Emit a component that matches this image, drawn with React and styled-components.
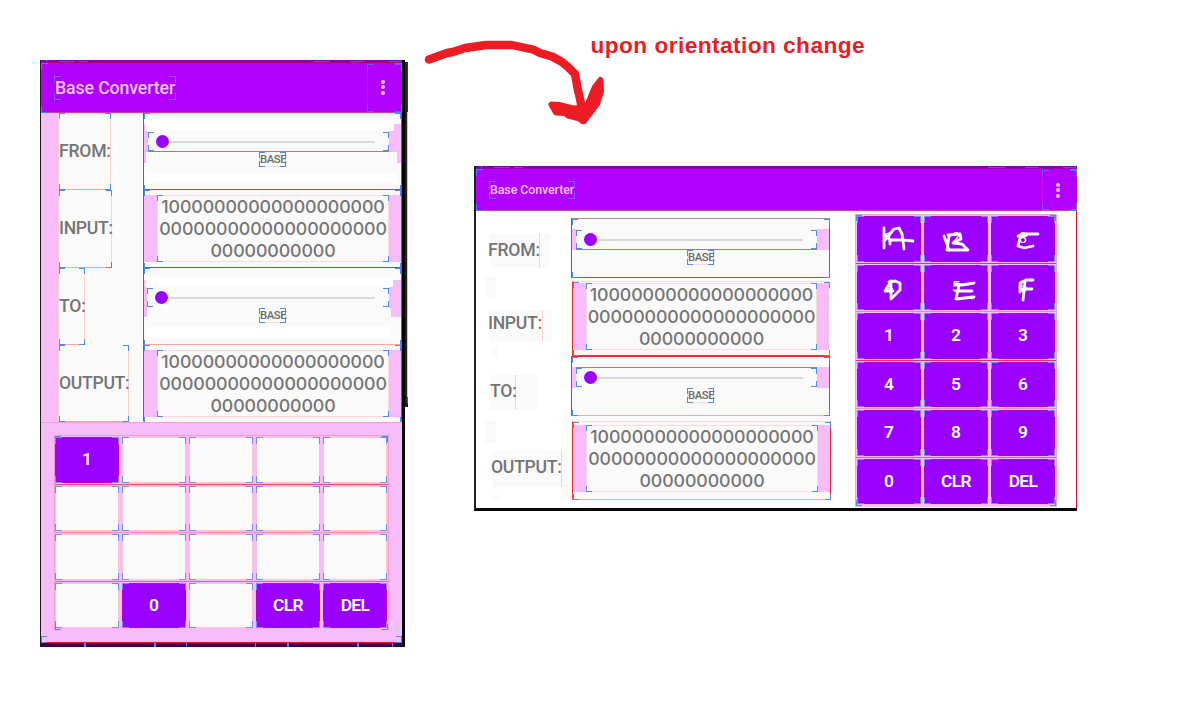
import React from 'react';
import styled, { createGlobalStyle, css } from 'styled-components';

const BLUE = '#4c8bf5';
const RED = '#f52b33';
const PINK = '#f9bcfa';
const PAPER = '#fafafa';
const KEY = '#9900ff';
const BAR = '#b200ff';

const Global = createGlobalStyle`
  * { box-sizing: border-box; }
  body { margin: 0; background: #fff; overflow: hidden; font-family: Roboto, sans-serif; }
`;

const corners = (len = 6, color = BLUE) => {
  const g = `linear-gradient(${color}, ${color})`;
  return css`
    background:
      ${g} left top / ${len}px 1px no-repeat,
      ${g} left top / 1px ${len}px no-repeat,
      ${g} right top / ${len}px 1px no-repeat,
      ${g} right top / 1px ${len}px no-repeat,
      ${g} left bottom / ${len}px 1px no-repeat,
      ${g} left bottom / 1px ${len}px no-repeat,
      ${g} right bottom / ${len}px 1px no-repeat,
      ${g} right bottom / 1px ${len}px no-repeat;
  `;
};

/* Draws blue layout-bounds corners over an element. */
const bounds = (len, color, inset = '0') => css`
  position: relative;
  &::after {
    content: '';
    position: absolute;
    inset: ${inset};
    pointer-events: none;
    ${corners(len, color)}
  }
`;

const Page = styled.main`
  display: flex;
  align-items: flex-start;
  width: 1188px;
  height: 722px;
  padding-left: 40px;
  background: #fff;
`;

const Right = styled.section`
  display: flex;
  flex-direction: column;
`;

/* ---------- annotation ---------- */
const Annotation = styled.div`
  display: flex;
  height: 166px;
  padding-left: 12px;
`;
const Arrow = styled.svg`
  width: 190px;
  height: 140px;
  flex: none;
`;
const Note = styled.div`
  margin: 32px 0 0 -19.5px;
  font: bold 22.7px/27px 'Liberation Sans', Arial, sans-serif;
  letter-spacing: 0.43px;
  color: #ed1c24;
  white-space: nowrap;
`;

/* ---------- portrait frame ---------- */
const Portrait = styled.div`
  display: flex;
  align-items: flex-start;
  width: 368px;
  margin-top: 60px;
`;
const PortraitScreen = styled.div`
  width: 365px;
  height: 587px;
  border-left: 1px solid #1c1c1c;
  border-right: 3px solid #050505;
  display: flex;
  flex-direction: column;
`;
const SideShadow = styled.div`
  width: 3px;
  height: 345px;
  margin-top: 2px;
  border-left: 2px solid #222;
  background: linear-gradient(#5b0aa5 0 50px, #f0b4f4 50px 335px, #2d5ba8 335px 342px, #000 342px);
`;

const StatusEdge = styled.div`
  flex: none;
  height: ${p => p.$h}px;
  border-bottom: 1px solid ${p => p.$line};
  background:
    linear-gradient(#3568e0, #3568e0) 5px 0 / 1px 3px no-repeat,
    linear-gradient(#3568e0, #3568e0) 18px 1px / 16px 1px no-repeat,
    linear-gradient(#3568e0, #3568e0) 38px 1px / 9px 1px no-repeat,
    linear-gradient(#3568e0, #3568e0) calc(100% - 72px) 1px / 17px 1px no-repeat,
    linear-gradient(#3568e0, #3568e0) calc(100% - 38px) 1px / 14px 1px no-repeat,
    linear-gradient(#3568e0, #3568e0) calc(100% - 1px) 1px / 13px 1px no-repeat,
    #7c00b8;
`;
const AppBar = styled.header`
  flex: none;
  display: flex;
  justify-content: space-between;
  height: ${p => p.$h}px;
  background: ${BAR};
  border-bottom: 1px solid #c2489e;
  ${bounds(7, '#4a80ff', '0 0 -1px 0')}
`;
const Title = styled.h1`
  align-self: flex-start;
  height: ${p => (p.$small ? 18 : 24)}px;
  width: ${p => (p.$small ? 86 : 122)}px;
  margin: ${p => (p.$small ? '12px 0 0 13px' : '13px 0 0 13px')};
  padding: 0 1px;
  font: 500 ${p => (p.$small ? 12.4 : 17.8)}px/${p => (p.$small ? 18 : 24)}px Roboto, sans-serif;
  letter-spacing: ${p => (p.$small ? '-0.07px' : '-0.15px')};
  color: #f3c3fb;
  white-space: nowrap;
  ${bounds(7, '#7b61f5')}
`;
const Overflow = styled.div`
  display: flex;
  flex-direction: column;
  align-items: center;
  gap: 1.4px;
  width: 35px;
  padding: ${p => (p.$small ? 14 : 17)}px 5px 0 0;
  border-left: 1px solid #c811dc;
  ${bounds(7, '#6a5cff', '1px 0 0 -1px')}
`;
const Dot = styled.i`
  width: 4px;
  height: 4px;
  border-radius: 50%;
  background: #f3c3fb;
`;

/* ---------- conversion form ---------- */
const Form = styled.div`
  flex: none;
  display: grid;
  grid-template-columns: 17px 85px 259px;
  grid-template-rows: 77px 78px 77px 77px;
  height: 309px;
  background: linear-gradient(#dcdcdc, transparent 3px), ${PAPER};
`;
const Gutter = styled.div`
  grid-row: 1 / -1;
  background: ${PINK};
`;
const LabelCell = styled.div`
  width: ${p => p.$w}px;
  display: flex;
  align-items: center;
  padding-bottom: 1px;
  border-left: 1px solid #fbd0cf;
  border-right: 1px solid #fbd0cf;
  border-bottom: 1px solid #f6a3a3;
  ${bounds(6, BLUE, '0 -1px -1px 0')}
`;
const LabelText = styled.span`
  font: 500 17.6px/22px Roboto, sans-serif;
  letter-spacing: ${p => p.$ls}px;
  color: #757575;
  white-space: nowrap;
`;
const pinkSlab = (x, y, w, h) =>
  `linear-gradient(${PINK}, ${PINK}) ${x}px ${y}px / ${w}px ${h}px no-repeat`;
const MARGINS = {
  from: [pinkSlab(0, 11, 2, 39), pinkSlab(250, 11, 7, 8), pinkSlab(253, 38, 4, 12)],
  to: [pinkSlab(0, 12, 1, 18), pinkSlab(0, 29, 3, 20), pinkSlab(249, 12, 8, 10), pinkSlab(247, 38, 10, 11)],
};
const ValueCell = styled.div`
  display: flex;
  flex-direction: column;
  border-left: 1px solid ${RED};
  border-right: 1px solid ${RED};
  border-bottom: 1px solid ${p => p.$line || RED};
  background: ${p => (p.$margins ? MARGINS[p.$margins].join(', ') : 'none')};
  ${bounds(6, BLUE, '0 0 -2px 0')}
`;
const Strip = styled.div`
  height: 10px;
  margin: ${p => p.$m};
  background: #fff;
`;
const SliderRow = styled.div`
  display: flex;
  justify-content: space-between;
  flex: none;
  height: 21px;
  background: linear-gradient(${PINK}, ${PINK}) left / ${p => p.$left}px 100% no-repeat,
    linear-gradient(${PINK}, ${PINK}) right / ${p => p.$right}px 100% no-repeat;
  padding: 0 ${p => p.$right}px 0 ${p => p.$left}px;
`;
const SliderBox = styled.div`
  flex: 1;
  display: flex;
  align-items: center;
  padding: 0 14px 0 8px;
  border-top: 1px solid ${p => p.$top || 'transparent'};
  border-bottom: 1px solid ${p => p.$bottom || 'transparent'};
  ${bounds(6)}
`;
const Thumb = styled.i`
  width: 13px;
  height: 13px;
  border-radius: 50%;
  background: ${KEY};
`;
const Track = styled.i`
  flex: 1;
  height: 2px;
  background: #d9d9d9;
`;
const Base = styled.div`
  align-self: center;
  width: 27px;
  height: 15px;
  text-align: center;
  font: 500 11.4px/15px Roboto, sans-serif;
  letter-spacing: -0.5px;
  color: #6c6c6c;
  border: 1px solid #fbd9d9;
  border-width: 0 1px 1px;
  ${bounds(6, BLUE, '0 -1px -1px -1px')}
`;
const NumberRow = styled.div`
  height: 67px;
  padding: 0 ${p => p.$right}px 0 13px;
  background: ${PINK};
`;
const NumberBox = styled.div`
  height: 67px;
  background: ${PAPER};
  border: 1px solid #fcdada;
  display: flex;
  flex-direction: column;
  align-items: center;
  ${bounds(6, BLUE, '-1px')}
`;
const Digits = styled.span`
  font: 500 17.8px/22px Inter, sans-serif;
  letter-spacing: -0.1px;
  color: #757575;
  white-space: nowrap;
`;
const Spacer = styled.div`
  flex: none;
  height: ${p => p.$h}px;
`;

/* ---------- keypads ---------- */
const PadArea = styled.div`
  flex: none;
  height: 221px;
  padding: 12px 13px 0;
  background: ${PINK};
  border-top: 1px solid #fb9fca;
  border-bottom: 1px solid #f20d35;
  ${bounds(6, BLUE, '213px 0 -1px 0')}
`;
const Pad = styled.div`
  display: flex;
  flex-direction: column;
  width: ${p => p.$w}px;
  border: 1px solid #f59cc0;
  border-bottom-color: transparent;
  background: ${PINK};
  ${bounds(6)}
`;
const KeyRow = styled.div`
  display: grid;
  grid-template-columns: repeat(${p => p.$cols}, 64px);
  column-gap: 3px;
  height: 48.5px;
  padding: 1px 0 0 ${p => p.$pl}px;
  border-bottom: 1px solid ${p => p.$line};
`;
const Key = styled.div`
  display: flex;
  align-items: center;
  justify-content: center;
  height: 45.5px;
  font: ${p => (p.$covered ? '400 15px' : '600 17.4px')}/22px Roboto, sans-serif;
  letter-spacing: ${p => (p.$long ? '-0.6px' : '0')};
  padding-bottom: 1px;
  color: #fff;
  border: 1px solid ${p => (p.$on ? '#b300cf' : '#fdc4d8')};
  background: ${p => (p.$on ? KEY : PAPER)};
  ${bounds(7, '#6f8ff5', '-1px')}
`;
const Scribble = styled.svg`
  position: absolute;
  left: -1px;
  top: -1px;
  width: 64px;
  height: 46px;
  fill: none;
  stroke: #fff;
  stroke-width: 2.8;
  stroke-linecap: round;
  stroke-linejoin: round;
`;
const Nav = styled.div`
  height: 4px;
  background:
    linear-gradient(${BLUE}, ${BLUE}) 43px 0 / 2px 4px no-repeat,
    linear-gradient(${BLUE}, ${BLUE}) 113px 0 / 2px 4px no-repeat,
    linear-gradient(${BLUE}, ${BLUE}) 145px 0 / 1px 4px no-repeat,
    linear-gradient(${BLUE}, ${BLUE}) 214px 0 / 1px 4px no-repeat,
    linear-gradient(${BLUE}, ${BLUE}) 246px 0 / 2px 4px no-repeat,
    linear-gradient(${BLUE}, ${BLUE}) 316px 0 / 2px 4px no-repeat,
    linear-gradient(${BLUE}, ${BLUE}) 351px 0 / 1px 4px no-repeat,
    #3f0040;
`;

/* ---------- landscape frame ---------- */
const Landscape = styled.div`
  display: flex;
  flex-direction: column;
  width: 603px;
  height: 345px;
  margin-left: 66px;
  border-left: 2px solid #222;
  border-bottom: 3px solid #080808;
`;
const LandBody = styled.div`
  flex: 1;
  display: grid;
  grid-template-columns: 95px 260px 24px 202px;
  border-right: 1px solid #e30b2c;
`;
const Labels = styled.div`
  padding: 23px 0 0 9px;
`;
const Patch = styled.div`
  display: flex;
  align-items: center;
  height: ${p => p.$h}px;
  width: ${p => p.$w}px;
  margin: 0 0 ${p => p.$mb}px ${p => p.$ml}px;
  padding-bottom: ${p => p.$lift}px;
  background:
    linear-gradient(#fbd0cf, #fbd0cf) ${p => p.$line}px 0 / 1px 100% no-repeat,
    ${PAPER};
`;
const PatchText = styled(LabelText)`
  margin-left: ${p => p.$x}px;
`;
const Smudge = styled.div`
  width: ${p => p.$w}px;
  height: ${p => p.$h}px;
  margin: 0 0 ${p => p.$mb}px ${p => p.$ml}px;
  background: ${PAPER};
`;
const Values = styled.div`
  padding-top: 7px;
`;
const Block = styled.div`
  display: flex;
  flex-direction: column;
  width: ${p => p.$w}px;
  height: ${p => p.$h}px;
  margin: 0 0 ${p => p.$mb}px ${p => p.$ml || 0}px;
  background: ${PAPER};
  border-style: solid;
  border-width: 1px;
  border-color: ${p => p.$edges};
  ${bounds(6, BLUE, '0 -1px -1px 0')}
`;
const LandPad = styled.div`
  padding-top: 3px;
`;

const LINES = ['1' + '0'.repeat(19), '0'.repeat(20), '0'.repeat(11)];

const NumberField = ({ right }) => (
  <NumberRow $right={right}>
    <NumberBox>
      {LINES.map((line, i) => <Digits key={i}>{line}</Digits>)}
    </NumberBox>
  </NumberRow>
);

const Slider = ({ left, right, top, bottom }) => (
  <SliderRow $left={left} $right={right}>
    <SliderBox $top={top} $bottom={bottom}><Thumb /><Track /></SliderBox>
  </SliderRow>
);

const Menu = ({ small }) => (
  <Overflow $small={small}><Dot /><Dot /><Dot /></Overflow>
);

const KeyCell = ({ label, scribble }) => (
  <Key $on={!!label} $long={label.length > 1} $covered={!!scribble}>
    {label}
    {scribble && <Scribble viewBox="0 0 64 46"><path d={scribble} /></Scribble>}
  </Key>
);

const PORTRAIT_KEYS = [
  ['1', '', '', '', ''],
  ['', '', '', '', ''],
  ['', '', '', '', ''],
  ['', '0', '', 'CLR', 'DEL'],
];
const LAND_KEYS = [
  ['1', '2', '3'], ['4', '5', '6'],
  ['1', '2', '3'], ['4', '5', '6'],
  ['7', '8', '9'], ['0', 'CLR', 'DEL'],
];
const SCRIBBLES = [
  [
    'M27 12V32M28 24L37 13L42 12L45 18L47 33M33 28V24L28 19M34 24H46L56 25',
    'M20 20L25 34M24 19L36 18L37 23L29 27L38 28L44 34H23L25 21',
    'M47 18H33L27 20M36 19L29 22L27 30L33 32L42 30',
  ],
  [
    'M34 16V34L43 25V18L38 16L32 17M34 17L28 26H36',
    'M50 18L38 20L32 19M35 20L32 34L49 32M32 26H48M48 33L50 32',
    'M42 15H35L29 18M34 17L32 35M29 24H41M29 20V27',
  ],
];
const LINE_COLORS = ['#fa4a68', '#f88bb4', '#fb5c83', 'transparent'];
const LAND_LINES = ['#ef3060', '#ef86b8', '#ee2c5f', '#f48cb4', '#f35387', 'transparent'];

export default function App() {
  return (
    <Page>
      <Global />
      <Portrait>
        <PortraitScreen>
          <StatusEdge $h={3} $line="#b0006e" />
          <AppBar $h={50}>
            <Title>Base Converter</Title>
            <Menu />
          </AppBar>
          <Form>
            <Gutter />
            <LabelCell $w={53}><LabelText $ls={-0.25}>FROM:</LabelText></LabelCell>
            <ValueCell $margins="from">
              <Spacer $h={7} />
              <Strip $m="0 7px 0 1px" />
              <Spacer $h={1} />
              <Slider left={4} right={12} bottom="#f35a5a" />
              <Base>BASE</Base>
              <Spacer $h={6} />
              <Strip $m="0 4px 0 2px" />
            </ValueCell>
            <LabelCell $w={54}><LabelText $ls={-0.3}>INPUT:</LabelText></LabelCell>
            <ValueCell>
              <Spacer $h={5} />
              <NumberField right={12} />
            </ValueCell>
            <LabelCell $w={27}><LabelText $ls={-0.2}>TO:</LabelText></LabelCell>
            <ValueCell $line="#fba6a0" $margins="to">
              <Spacer $h={9} />
              <Strip $m="0 8px 0 2px" />
              <Slider left={3} right={12} />
              <Base>BASE</Base>
              <Spacer $h={4} />
              <Strip $m="0 10px 0 3px" />
            </ValueCell>
            <LabelCell $w={71}><LabelText $ls={-0.3}>OUTPUT:</LabelText></LabelCell>
            <ValueCell $line="transparent">
              <Spacer $h={5} />
              <NumberField right={12} />
            </ValueCell>
          </Form>
          <PadArea>
            <Pad $w={335}>
              {PORTRAIT_KEYS.map((row, r) => (
                <KeyRow key={r} $cols={5} $pl={0} $line={LINE_COLORS[r]}>
                  {row.map((k, c) => <KeyCell key={c} label={k} />)}
                </KeyRow>
              ))}
            </Pad>
          </PadArea>
          <Nav />
        </PortraitScreen>
        <SideShadow />
      </Portrait>

      <Right>
        <Annotation>
          <Arrow viewBox="420 0 190 140" fill="#ed1c24" stroke="#ed1c24" strokeLinecap="round" strokeLinejoin="round">
            <path fill="none" strokeWidth="8.4" d="M429 59.5L447 53L453 52L465 48L486 45H512L521 47L533 49.5L540 53L552 56.5L562 62L568 67L575 74L577.5 88L580.5 101L583 120" />
            <path strokeWidth="6" d="M551.5 104.5L559 105L573 108.5L581 108L588 104L595 87L600.5 80L601 91L597 104L584 121L578 118L568 115.500L565 113L556 112.5Z" />
          </Arrow>
          <Note>upon orientation change</Note>
        </Annotation>
        <Landscape>
          <StatusEdge $h={3} $line="#a000a8" />
          <AppBar $h={42}>
            <Title $small>Base Converter</Title>
            <Menu small />
          </AppBar>
          <LandBody>
            <Labels>
              <Patch $w={60} $h={34} $ml={5} $mb={8} $line={49} $lift={2}><PatchText $ls={-0.2} $x={-2}>FROM:</PatchText></Patch>
              <Smudge $w={11} $h={21} $ml={0} $mb={13} />
              <Patch $w={62} $h={31} $ml={5} $mb={6} $line={52} $lift={5}><PatchText $ls={-0.3} $x={-2}>INPUT:</PatchText></Patch>
              <Smudge $w={6} $h={10} $ml={7} $mb={18} />
              <Patch $w={47} $h={35} $ml={5} $mb={10} $line={25} $lift={3}><PatchText $ls={-0.2} $x={0}>TO:</PatchText></Patch>
              <Smudge $w={11} $h={23} $ml={0} $mb={7} />
              <Patch $w={78} $h={37} $ml={7} $mb={7} $line={69} $lift={4}><PatchText $ls={-0.25} $x={-1}>OUTPUT:</PatchText></Patch>
              <Smudge $w={6} $h={7} $ml={8} $mb={0} />
            </Labels>
            <Values>
              <Block $w={259} $h={60} $mb={3} $edges={`#a98f94 ${RED} ${RED} ${RED}`}>
                <Spacer $h={10} />
                <Slider left={4} right={12} bottom="#f35a5a" />
                <Base>BASE</Base>
              </Block>
              <Block $w={258} $h={75} $mb={0} $ml={1} $edges={`#fcdada transparent ${RED} ${RED}`}>
                <Spacer $h={1} />
                <NumberField right={12} />
              </Block>
              <Block $w={259} $h={60} $mb={5} $edges={`${RED} ${RED} #fba6a0 ${RED}`}>
                <Spacer $h={10} />
                <Slider left={4} right={12} top="#f35a5a" />
                <Base>BASE</Base>
              </Block>
              <Block $w={259} $h={79} $mb={0} $ml={1} $edges={`#fcdada ${RED} #f9a0e0 ${RED}`}>
                <Spacer $h={3} />
                <NumberField right={12} />
              </Block>
            </Values>
            <div />
            <LandPad>
              <Pad $w={202}>
                {LAND_KEYS.map((row, r) => (
                  <KeyRow key={r} $cols={3} $pl={1} $line={LAND_LINES[r]}>
                    {row.map((k, c) => (
                      <KeyCell key={c} label={k} scribble={SCRIBBLES[r] && SCRIBBLES[r][c]} />
                    ))}
                  </KeyRow>
                ))}
              </Pad>
            </LandPad>
          </LandBody>
        </Landscape>
      </Right>
    </Page>
  );
}
